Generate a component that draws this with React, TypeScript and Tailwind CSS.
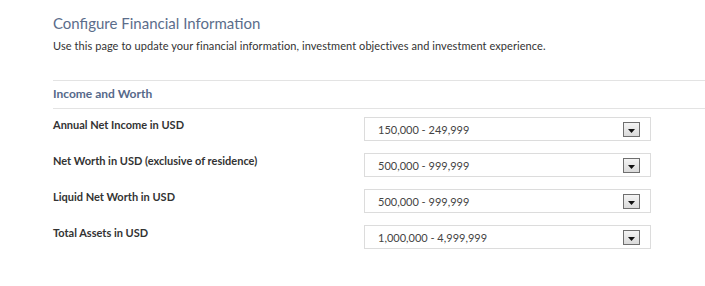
import { FC } from "react";

const rows = [
  { label: "Annual Net Income in USD", value: "150,000 - 249,999" },
  { label: "Net Worth in USD (exclusive of residence)", value: "500,000 - 999,999" },
  { label: "Liquid Net Worth in USD", value: "500,000 - 999,999" },
  { label: "Total Assets in USD", value: "1,000,000 - 4,999,999" },
];

const ArrowButton: FC = () => (
  <span className="flex h-[15px] w-[17px] items-center justify-center border border-[#6f6f6f] bg-gradient-to-b from-[#f4f4f4] to-[#dadada]">
    <svg width="7" height="4" viewBox="0 0 7 4" className="mt-[3px]">
      <path d="M0 0 H7 L3.5 4 Z" fill="#111" />
    </svg>
  </span>
);

const SelectBox: FC<{ value: string }> = ({ value }) => (
  <div className="flex h-[24px] w-[287px] items-center justify-between border border-[#dcdcdc] bg-white pl-[13px] pr-[10px]">
    <span className="text-[11px] leading-none text-[#444]">{value}</span>
    <ArrowButton />
  </div>
);

export default function App() {
  return (
    <div className="min-h-[286px] bg-white pl-[53px] pt-[13px] font-['Lato','Liberation_Sans',sans-serif]">
      <h1 className="text-[15px] leading-[20px] text-[#5b6d8b]">Configure Financial Information</h1>
      <p className="mt-[6px] text-[11px] leading-[14px] tracking-[0.07px] text-[#333]">
        Use this page to update your financial information, investment objectives and investment experience.
      </p>

      <div className="mt-[27px] border-t border-b border-[#e3e3e3]">
        <h2 className="pb-[7px] pt-[5px] text-[12px] font-bold leading-[15px] text-[#56698a]">Income and Worth</h2>
      </div>

      <div className="mt-[8px] flex flex-col gap-[12px]">
        {rows.map((row) => (
          <div key={row.label} className="flex items-start">
            <label className="w-[311px] pt-[1px] text-[11px] font-bold leading-[14px] text-[#333]">
              {row.label}
            </label>
            <SelectBox value={row.value} />
          </div>
        ))}
      </div>
    </div>
  );
}
